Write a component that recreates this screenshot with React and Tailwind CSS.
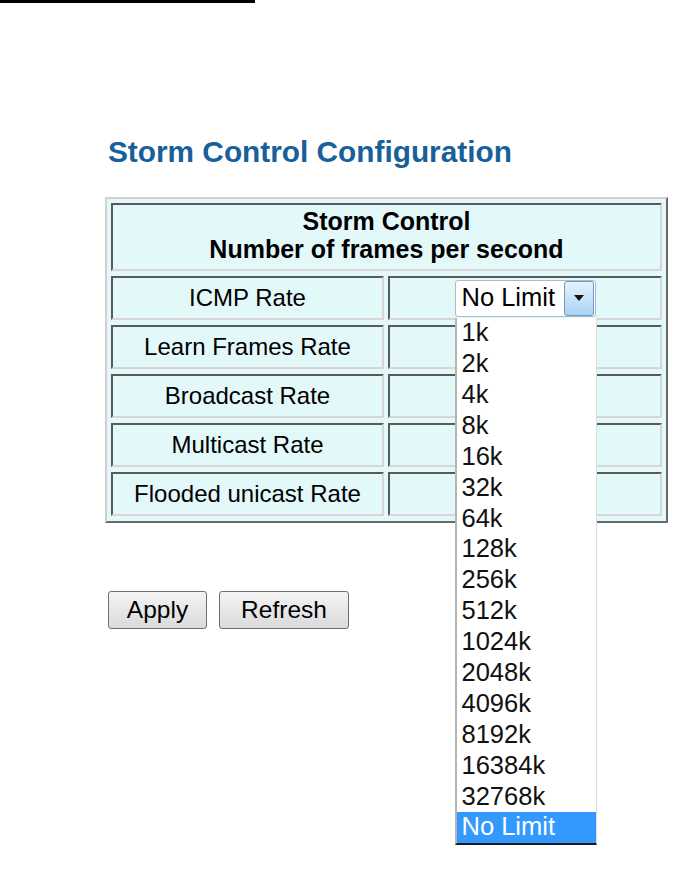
import React from "react";

const font = { fontFamily: '"Liberation Sans", Arial, sans-serif' };

const rates = [
  "Learn Frames Rate",
  "Broadcast Rate",
  "Multicast Rate",
  "Flooded unicast Rate",
];

const options = [
  "1k", "2k", "4k", "8k", "16k", "32k", "64k", "128k", "256k", "512k",
  "1024k", "2048k", "4096k", "8192k", "16384k", "32768k", "No Limit",
];

const cell =
  "border-2 border-t-[#5a5a5a] border-l-[#5a5a5a] border-r-[#d6d6d6] border-b-[#d6d6d6] bg-[#e2f8f9]";

const RateSelect = () => (
  <div className="relative">
    {/* closed select */}
    <div className="flex items-center w-[141px] h-[37px] bg-white border border-[#a9bccd] rounded-[3px] pl-[6px] pr-[1px]">
      <span className="flex-1 text-[25.5px] leading-none text-black">No Limit</span>
      <div className="flex items-center justify-center w-[30px] h-[35px] rounded-[3px] border border-[#6c9bc8] bg-gradient-to-b from-[#e6f2fd] to-[#a9d3f4]">
        <svg width="10" height="6" viewBox="0 0 10 6">
          <path d="M0 0h10L5 6z" fill="#111" />
        </svg>
      </div>
    </div>

    {/* open option list */}
    <div className="absolute left-0 top-[38px] w-[142px] bg-white border-l-2 border-l-[#b4b4b4] border-r border-r-[#dcdcdc] border-b-2 border-b-[#1a1a1a] z-10">
      {options.map((o) => (
        <div
          key={o}
          className={`h-[30.9px] flex items-center pl-[5px] text-[25.5px] leading-none ${
            o === "No Limit" ? "bg-[#3399ff] text-white" : "text-[#111]"
          }`}
        >
          {o}
        </div>
      ))}
    </div>
  </div>
);

export default function App() {
  return (
    <div className="min-h-[872px] bg-white text-black" style={font}>
      <div className="w-[255px] h-[3px] bg-black" />

      <div className="pl-[105px]">
        <h1 className="mt-[132px] ml-[3px] text-[29.8px] leading-[34px] font-bold text-[#17609a]">
          Storm Control Configuration
        </h1>

        {/* table */}
        <div className="mt-[28px] w-fit border-2 border-t-[#d0d0d0] border-l-[#d0d0d0] border-r-[#6a6a6a] border-b-[#6a6a6a] bg-[#e2f8f9]">
          <div className="grid grid-cols-[273px_274px] gap-x-[4px] gap-y-[5px] p-[4px] pb-[5px]">
            <div className={`${cell} col-span-2 h-[68px] flex flex-col items-center justify-center pb-[4px] font-bold text-[25px] leading-[28px]`}>
              <div>Storm Control</div>
              <div>Number of frames per second</div>
            </div>

            <div className={`${cell} h-[44px] flex items-center justify-center text-[24px]`}>
              ICMP Rate
            </div>
            <div className={`${cell} h-[44px] flex items-center justify-center relative z-10`}>
              <RateSelect />
            </div>

            {rates.map((r) => (
              <React.Fragment key={r}>
                <div className={`${cell} h-[44px] flex items-center justify-center text-[24px]`}>
                  {r}
                </div>
                <div className={`${cell} h-[44px]`} />
              </React.Fragment>
            ))}
          </div>
        </div>

        {/* buttons */}
        <div className="mt-[68px] ml-[3px] flex gap-[12px]">
          <button className="w-[99px] h-[38px] border border-[#707070] rounded-[3px] bg-gradient-to-b from-[#f4f4f4] to-[#dadada] text-[24.5px] leading-none text-black">
            Apply
          </button>
          <button className="w-[130px] h-[38px] border border-[#707070] rounded-[3px] bg-gradient-to-b from-[#f4f4f4] to-[#dadada] text-[24.5px] leading-none text-black">
            Refresh
          </button>
        </div>
      </div>
    </div>
  );
}
